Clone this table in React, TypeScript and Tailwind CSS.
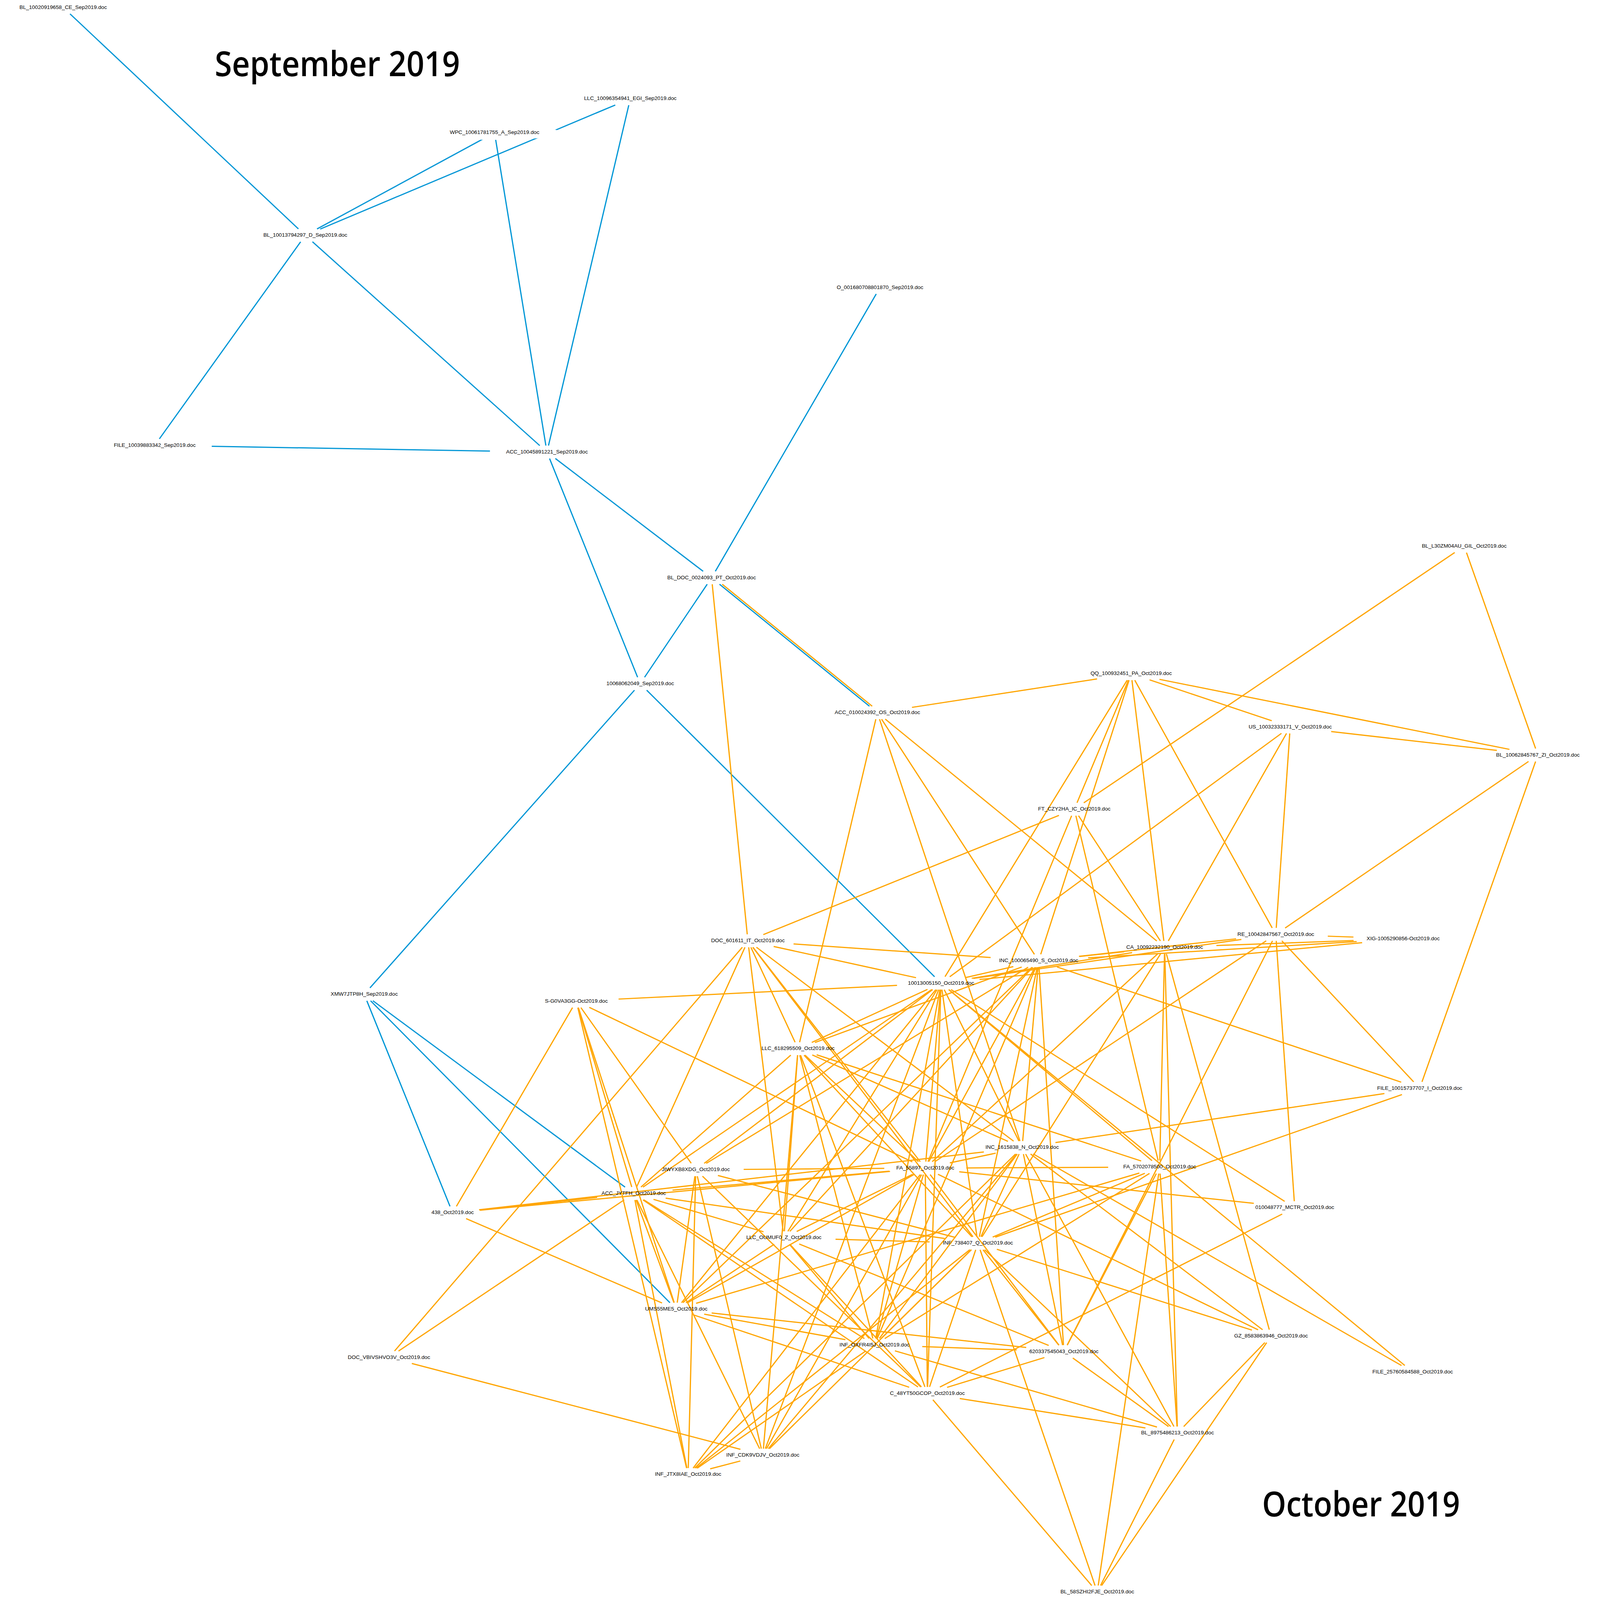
import React from 'react'

// node label centre x, text baseline y (in a 1520-wide view box)
type Node = { label: string; x: number; y: number }

const NODES: Record<string, Node> = {
  s1: { label: 'BL_10020919658_CE_Sep2019.doc', x: 60, y: 8.7 },
  s2: { label: 'WPC_10061781755_A_Sep2019.doc', x: 469.8, y: 132 },
  s3: { label: 'LLC_10096354941_EGI_Sep2019.doc', x: 598.8, y: 98.5 },
  s4: { label: 'BL_10013794297_D_Sep2019.doc', x: 290, y: 233 },
  s5: { label: 'O_001680708801870_Sep2019.doc', x: 836, y: 284.3 },
  s6: { label: 'FILE_10039883342_Sep2019.doc', x: 147, y: 439.7 },
  s7: { label: 'ACC_10045891221_Sep2019.doc', x: 519.6, y: 446.3 },
  s8: { label: '10068062049_Sep2019.doc', x: 608.2, y: 674.3 },
  s9: { label: 'XMW7JTP8H_Sep2019.doc', x: 346, y: 980 },
  o1: { label: 'BL_DOC_0024093_PT_Oct2019.doc', x: 676, y: 570 },
  o2: { label: 'BL_L30ZM04AU_GIL_Oct2019.doc', x: 1391, y: 538.9 },
  o3: { label: 'QQ_100932451_PA_Oct2019.doc', x: 1074.6, y: 664.4 },
  o4: { label: 'ACC_010024392_OS_Oct2019.doc', x: 833.5, y: 702.8 },
  o5: { label: 'US_10032333171_V_Oct2019.doc', x: 1225.7, y: 716.8 },
  o6: { label: 'BL_10062845767_ZI_Oct2019.doc', x: 1461, y: 744.5 },
  o7: { label: 'FT_CZY2HA_IC_Oct2019.doc', x: 1020.6, y: 797.8 },
  o8: { label: 'DOC_601611_IT_Oct2019.doc', x: 710.5, y: 927.3 },
  o9: { label: 'RE_10042847567_Oct2019.doc', x: 1212, y: 921 },
  o10: { label: 'XIG-1005290856-Oct2019.doc', x: 1333, y: 925.3 },
  o11: { label: 'CA_10092232190_Oct2019.doc', x: 1106.4, y: 933.8 },
  o12: { label: 'INC_100065490_S_Oct2019.doc', x: 986.7, y: 947 },
  o13: { label: '10013005150_Oct2019.doc', x: 894, y: 969 },
  o14: { label: 'S-G0VA3GG-Oct2019.doc', x: 547.5, y: 986.7 },
  o15: { label: 'LLC_618295509_Oct2019.doc', x: 758.2, y: 1033.5 },
  o16: { label: 'FILE_10015737707_I_Oct2019.doc', x: 1348.7, y: 1072.5 },
  o17: { label: 'INC_1615838_N_Oct2019.doc', x: 971, y: 1130.8 },
  o18: { label: 'FA_5702078500_Oct2019.doc', x: 1101.7, y: 1150 },
  o19: { label: 'FA_55897_Oct2019.doc', x: 879, y: 1151 },
  o20: { label: 'JIWYXB8XDG_Oct2019.doc', x: 661, y: 1152.6 },
  o21: { label: 'ACC_JYTFH_Oct2019.doc', x: 602, y: 1176 },
  o22: { label: '438_Oct2019.doc', x: 430, y: 1195 },
  o23: { label: '010048777_MCTR_Oct2019.doc', x: 1230, y: 1190 },
  o24: { label: 'LLC_OUMUF0_Z_Oct2019.doc', x: 744.7, y: 1219.6 },
  o25: { label: 'INF_738407_Q_Oct2019.doc', x: 929, y: 1225 },
  o26: { label: 'UMS55ME5_Oct2019.doc', x: 642.5, y: 1289.8 },
  o27: { label: 'GZ_8583863946_Oct2019.doc', x: 1207.5, y: 1316.4 },
  o28: { label: 'INF_OXFR4I5J_Oct2019.doc', x: 830.8, y: 1325 },
  o29: { label: '620337545043_Oct2019.doc', x: 1010.7, y: 1331.6 },
  o30: { label: 'DOC_VBIVSHVO3V_Oct2019.doc', x: 369.5, y: 1337.4 },
  o31: { label: 'FILE_25760584588_Oct2019.doc', x: 1342, y: 1351.6 },
  o32: { label: 'C_48YT50GCOP_Oct2019.doc', x: 881, y: 1372.7 },
  o33: { label: 'BL_8975486213_Oct2019.doc', x: 1118.6, y: 1411.7 },
  o34: { label: 'INF_CDK9VDJV_Oct2019.doc', x: 724.7, y: 1433.5 },
  o35: { label: 'INF_JTX8IAE_Oct2019.doc', x: 653.7, y: 1452.6 },
  o36: { label: 'BL_58SZHI2FJE_Oct2019.doc', x: 1042.4, y: 1568.2 },
}

const BLUE_EDGES = `s1-s4 s2-s4 s3-s4 s3-s7 s2-s7 s4-s6 s4-s7 s6-s7 s7-s8 s7-o1 s5-o1 o1-s8 o1-o4
  s8-o13 s8-s9 s9-o22 s9-o21 s9-o26`

const ORANGE_EDGES = `o1-o4 o1-o8 o2-o7 o2-o6
  o3-o4 o3-o5 o3-o6 o3-o7 o3-o13 o3-o12 o3-o11 o3-o9
  o5-o6 o5-o13 o5-o9 o5-o11 o6-o9 o6-o16
  o7-o8 o7-o19 o7-o18 o7-o11
  o4-o15 o4-o17 o4-o12 o4-o11
  o8-o13 o8-o12 o8-o30 o8-o21 o8-o24 o8-o15 o8-o19 o8-o25 o8-o17
  o13-o14 o12-o13 o11-o13 o9-o13 o10-o13 o13-o15 o13-o20 o13-o21 o13-o26 o13-o17 o13-o18
  o13-o23 o13-o31 o13-o19 o13-o25 o13-o32 o13-o24 o13-o28 o13-o34
  o12-o15 o12-o17 o12-o19 o12-o20 o12-o24 o12-o25 o12-o26 o12-o28 o12-o29 o12-o16 o12-o9 o12-o10 o11-o12
  o9-o10 o10-o11 o9-o19 o9-o29 o9-o23 o9-o16
  o16-o17 o16-o25
  o11-o27 o11-o18 o11-o33 o11-o19 o11-o25
  o17-o27 o19-o27 o25-o27 o27-o33 o27-o36 o17-o31
  o23-o32 o19-o23
  o32-o36 o32-o33 o29-o32 o25-o32 o19-o32 o26-o32 o21-o32 o24-o32 o20-o32 o15-o32
  o25-o29 o26-o29 o28-o29 o24-o29 o29-o33 o18-o29 o25-o33
  o28-o33 o17-o33 o18-o36 o25-o36 o33-o36 o18-o33
  o18-o19 o18-o25 o18-o28 o18-o26
  o17-o19 o17-o22 o19-o22 o21-o22 o19-o21 o19-o20 o20-o25 o21-o25 o21-o24 o21-o28 o21-o35 o21-o26 o21-o34 o21-o30
  o14-o22 o14-o19 o14-o20 o14-o21 o14-o26 o14-o35
  o15-o21 o15-o34 o15-o24 o15-o19 o15-o25 o15-o17 o15-o18 o15-o28
  o22-o26 o20-o26 o24-o26 o19-o26 o26-o28 o19-o24
  o20-o35 o20-o34 o19-o35 o17-o35 o25-o35 o28-o35 o34-o35 o30-o34
  o19-o34 o17-o34 o25-o34 o19-o28 o25-o28 o24-o28 o24-o25 o19-o29 o17-o25 o17-o29 o17-o28`

// Arial advance widths (em)
const ADV: Record<string, number> = {
  A: 0.667, B: 0.667, C: 0.722, D: 0.722, E: 0.667, F: 0.611, G: 0.778, H: 0.722, I: 0.278,
  J: 0.5, K: 0.667, L: 0.556, M: 0.833, N: 0.722, O: 0.778, P: 0.667, Q: 0.778, R: 0.722,
  S: 0.667, T: 0.611, U: 0.722, V: 0.667, W: 0.944, X: 0.667, Y: 0.667, Z: 0.611,
  c: 0.5, d: 0.556, e: 0.556, o: 0.556, p: 0.556, t: 0.278, _: 0.556, '.': 0.278, '-': 0.333,
}

const FS = 5.1
const textWidth = (s: string) => s.split('').reduce((w, ch) => w + (ADV[ch] ?? 0.556), 0) * FS

// label ellipse the edges stop at
const ellipse = (n: Node) => ({ cx: n.x, cy: n.y - 1.4, a: (textWidth(n.label) / 2) * 1.41, b: 6.4 })

function parse(list: string) {
  const seen = new Set<string>()
  const out: [string, string][] = []
  list.split(/\s+/).filter(Boolean).forEach(pair => {
    const [a, b] = pair.split('-')
    const key = [a, b].sort().join('|')
    if (seen.has(key) || !NODES[a] || !NODES[b]) return
    seen.add(key)
    out.push([a, b])
  })
  return out
}

function segment(a: string, b: string, shift = 0) {
  const A = ellipse(NODES[a])
  const B = ellipse(NODES[b])
  const dx = B.cx - A.cx
  const dy = B.cy - A.cy
  const tA = 1 / Math.sqrt((dx / A.a) ** 2 + (dy / A.b) ** 2)
  const tB = 1 / Math.sqrt((dx / B.a) ** 2 + (dy / B.b) ** 2)
  if (tA + tB >= 1) return null
  return {
    x1: A.cx + dx * tA + shift, y1: A.cy + dy * tA,
    x2: B.cx - dx * tB + shift, y2: B.cy - dy * tB,
  }
}

function Edges({ list, color, shifts = {} }: { list: string; color: string; shifts?: Record<string, number> }) {
  return (
    <g stroke={color} strokeWidth={1.15} fill="none">
      {parse(list).map(([a, b]) => {
        const s = segment(a, b, shifts[`${a}-${b}`] ?? 0)
        if (!s) return null
        return <line key={`${a}-${b}`} {...s} />
      })}
    </g>
  )
}

export default function App() {
  const wpc = ellipse(NODES.s2)
  return (
    <div className="w-screen h-screen overflow-hidden bg-white">
      {/* the graph canvas fills the whole window, like the exported picture */}
      <svg viewBox="0 0 1520 1574.66" preserveAspectRatio="none" className="block w-full h-full">
        <Edges list={BLUE_EDGES} color="#0096d6" />
        <Edges list={ORANGE_EDGES} color="#ffa500" shifts={{ 'o1-o4': 2.6 }} />

        {/* the WPC label sits over the LLC edge */}
        <ellipse cx={wpc.cx} cy={wpc.cy} rx={wpc.a * 1.06} ry={wpc.b * 1.1} fill="#fff" />

        <g fontFamily="'Liberation Sans', Arial, sans-serif" fontSize={FS} fill="#000" textAnchor="middle">
          {Object.entries(NODES).map(([id, n]) => (
            <text key={id} x={n.x} y={n.y}>{n.label}</text>
          ))}
        </g>

        <g fontFamily="'Open Sans', 'Noto Sans', sans-serif" fontSize={34} fontWeight={600} fill="#000">
          <text x={204} y={75} textLength={233} lengthAdjust="spacingAndGlyphs">September 2019</text>
          <text x={1199} y={1492.3} textLength={188} lengthAdjust="spacingAndGlyphs">October 2019</text>
        </g>
      </svg>
    </div>
  )
}
